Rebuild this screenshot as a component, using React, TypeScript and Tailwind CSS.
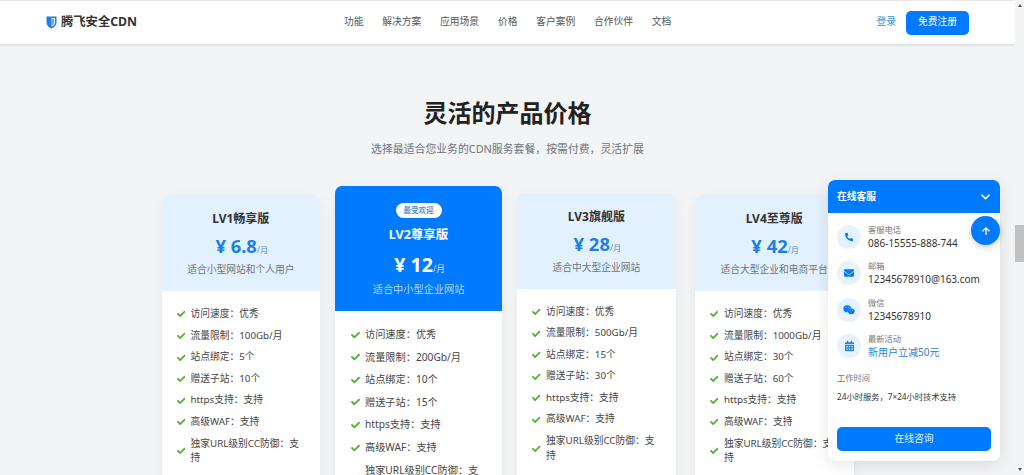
import { FaArrowUp, FaCalendarAlt, FaCheck, FaChevronDown, FaEnvelope, FaPhoneAlt, FaWeixin } from "react-icons/fa";

const navLinks = ["功能", "解决方案", "应用场景", "价格", "客户案例", "合作伙伴", "文档"];

const plans = [
  {
    name: "LV1畅享版",
    price: "6.8",
    desc: "适合小型网站和个人用户",
    features: ["访问速度：优秀", "流量限制：100Gb/月", "站点绑定：5个", "赠送子站：10个", "https支持：支持", "高级WAF：支持", "独家URL级别CC防御：支持"],
    offset: "mt-[9px]",
  },
  {
    name: "LV2尊享版",
    price: "12",
    desc: "适合中小型企业网站",
    features: ["访问速度：优秀", "流量限制：200Gb/月", "站点绑定：10个", "赠送子站：15个", "https支持：支持", "高级WAF：支持", "独家URL级别CC防御：支持"],
    featured: true,
    offset: "",
  },
  {
    name: "LV3旗舰版",
    price: "28",
    desc: "适合中大型企业网站",
    features: ["访问速度：优秀", "流量限制：500Gb/月", "站点绑定：15个", "赠送子站：30个", "https支持：支持", "高级WAF：支持", "独家URL级别CC防御：支持"],
    offset: "mt-[6.5px]",
  },
  {
    name: "LV4至尊版",
    price: "42",
    desc: "适合大型企业和电商平台",
    features: ["访问速度：优秀", "流量限制：1000Gb/月", "站点绑定：30个", "赠送子站：60个", "https支持：支持", "高级WAF：支持", "独家URL级别CC防御：支持"],
    offset: "mt-[9px]",
  },
];

const contacts = [
  { icon: FaPhoneAlt, size: "w-[8.5px]", label: "客服电话", value: "086-15555-888-744" },
  { icon: FaEnvelope, size: "w-[10px]", label: "邮箱", value: "12345678910@163.com" },
  { icon: FaWeixin, size: "w-[12px]", label: "微信", value: "12345678910" },
  { icon: FaCalendarAlt, size: "w-[9px] text-[#2a84d2]", label: "最新活动", value: "新用户立减50元", accent: true },
];

function PlanCard({ plan }: { plan: (typeof plans)[number] }) {
  if (plan.featured) {
    return (
      <div className="-mx-[4px] overflow-hidden rounded-t-[7px] bg-white shadow-[0_4px_14px_rgba(0,0,0,0.06)]">
        <div className="flex h-[125px] flex-col items-center bg-[#007bff] pt-[17px] text-white">
          <span className="flex h-[15px] items-center rounded-full bg-white px-[8px] text-[7.5px] font-medium text-[#2a80d6]">最受欢迎</span>
          <h3 className="mt-[7px] text-[12.5px] leading-[20px] font-bold">{plan.name}</h3>
          <div className="mt-[9px] flex items-baseline pl-[2px] leading-[22px]">
            <span className="text-[19.5px] font-bold">¥ {plan.price}</span>
            <span className="text-[8.7px] text-white/80">/月</span>
          </div>
          <p className="mt-[1px] text-[10.2px] leading-[16px] text-white/70">{plan.desc}</p>
        </div>
        <ul className="flex flex-col gap-[7.3px] pt-[16px] pr-[15px] pb-[60px] pl-[15.7px] text-[10.2px] leading-[15.3px] text-[#444]">
          {plan.features.map((f) => (
            <li key={f} className="flex items-center gap-[5px]">
              <FaCheck className="w-[9px] shrink-0 text-[#4fb135]" />
              <span>{f}</span>
            </li>
          ))}
        </ul>
      </div>
    );
  }
  return (
    <div className={`overflow-hidden rounded-t-[6px] bg-white shadow-[0_4px_14px_rgba(0,0,0,0.05)] ${plan.offset}`}>
      <div className="flex h-[96px] flex-col items-center bg-[#e3f1fe] pt-[14px]">
        <h3 className="text-[12px] leading-[19px] font-bold text-[#333]">{plan.name}</h3>
        <div className="mt-[6px] flex items-baseline pl-[2px] leading-[24px] text-[#1a7fe8]">
          <span className="text-[18.4px] font-bold">¥ {plan.price}</span>
          <span className="text-[8.25px] text-[#5a8fc8]">/月</span>
        </div>
        <p className="text-[9.75px] leading-[16px] whitespace-nowrap text-[#6c757d]">{plan.desc}</p>
      </div>
      <ul className="flex flex-col gap-[7px] pt-[16px] pr-[15px] pb-[60px] pl-[15px] text-[9.75px] leading-[14.6px] text-[#444]">
        {plan.features.map((f) => (
          <li key={f} className="flex items-center gap-[5.5px]">
            <FaCheck className="w-[8.5px] shrink-0 text-[#4fb135]" />
            <span>{f}</span>
          </li>
        ))}
      </ul>
    </div>
  );
}

function ChatPanel() {
  return (
    <div className="absolute top-[180px] left-[828px] w-[172px] rounded-[7px] bg-white shadow-[0_4px_16px_rgba(0,0,0,0.1)]">
      <div className="flex h-[33px] items-center justify-between rounded-t-[7px] bg-[#007bff] pr-[10px] pl-[9px] text-white">
        <span className="pt-[2px] text-[9.75px] font-bold">在线客服</span>
        <FaChevronDown className="w-[9px]" />
      </div>
      <button className="absolute top-[36px] right-0 flex h-[29px] w-[29px] items-center justify-center rounded-full bg-[#007bff] text-white shadow-[0_2px_6px_rgba(0,0,0,0.2)]">
        <FaArrowUp className="w-[8px]" />
      </button>
      <div className="flex flex-col gap-[10.3px] px-[9px] pt-[11px]">
        {contacts.map((c) => {
          const Icon = c.icon;
          return (
            <div key={c.label} className="flex items-center gap-[7px]">
              <div className="flex h-[24px] w-[24px] shrink-0 items-center justify-center rounded-full bg-[#e6f2fe] text-[#007bff]">
                <Icon className={c.size} />
              </div>
              <div>
                <div className="text-[8.25px] leading-[12px] text-[#777]">{c.label}</div>
                <div className={`text-[10px] leading-[14px] ${c.accent ? "text-[#2a84d2]" : "text-[#333]"}`}>{c.value}</div>
              </div>
            </div>
          );
        })}
      </div>
      <div className="mt-[13px] px-[9px] text-[8.25px] leading-[12px] text-[#777]">工作时间</div>
      <div className="mt-[6.5px] px-[9px] text-[8.25px] leading-[13px] text-[#333]">24小时服务，7×24小时技术支持</div>
      <div className="px-[9px] pt-[23.5px] pb-[10px]">
        <button className="flex h-[24px] w-full items-center justify-center rounded-[5px] bg-[#007bff] text-[9.75px] text-white/90">在线咨询</button>
      </div>
    </div>
  );
}

export default function App() {
  return (
    <div className="relative flex h-[475px] w-[1024px] overflow-hidden bg-[#f3f4f6] font-['Noto_Sans','Noto_Sans_CJK_SC',sans-serif]">
      <main className="w-[1015px] shrink-0">
        <header className="flex h-[44px] items-center border-t border-[#e8e8e8] bg-white px-[46px] shadow-[0_1px_3px_rgba(0,0,0,0.12)]">
          <div className="flex w-[298px] items-center gap-[4px]">
            <svg viewBox="0 0 22 26" className="h-[13px] w-[11px]">
              <path d="M1 1h20v12c0 6-5 10-10 12C6 23 1 19 1 13z" fill="#1a7fe8" />
              <path d="M11 4h7v9c0 4-3 6.500-7 8.500z" fill="#ffffff" />
              <path d="M11 6h5v7c0 3-2 4.800-5 6.300z" fill="#5aa8f0" />
            </svg>
            <span className="text-[12.3px] font-bold text-[#333]">腾飞安全CDN</span>
          </div>
          <nav className="flex gap-[18.8px] text-[9.75px] text-[#555]">
            {navLinks.map((l) => (
              <a key={l}>{l}</a>
            ))}
          </nav>
          <div className="ml-auto flex items-center gap-[10px]">
            <a className="text-[9.75px] text-[#3b8fd6]">登录</a>
            <button className="flex h-[24px] w-[63px] items-center justify-center rounded-[5px] bg-[#007bff] text-[9.75px] text-white">免费注册</button>
          </div>
        </header>

        <section className="pt-[51px] text-center">
          <h2 className="text-[24px] leading-[36px] font-bold text-[#222]">灵活的产品价格</h2>
          <p className="mt-[10px] text-[10.86px] leading-[16px] text-[#6c757d]">选择最适合您业务的CDN服务套餐，按需付费，灵活扩展</p>
        </section>

        <section className="mx-auto mt-[29px] grid w-[692px] grid-cols-4 items-start gap-[19.2px]">
          {plans.map((p) => (
            <PlanCard key={p.name} plan={p} />
          ))}
        </section>
      </main>

      <ChatPanel />

      {/* browser scrollbar */}
      <div className="relative w-[9px] bg-[#f3f4f6]">
        <div className="absolute top-[225px] h-[37px] w-full bg-[#c1c1c1]" />
        <div className="absolute top-[4px] left-[2.500px] border-x-[2.500px] border-b-[3px] border-x-transparent border-b-[#505050]" />
        <div className="absolute bottom-[4px] left-[2.500px] border-x-[2.500px] border-t-[3px] border-x-transparent border-t-[#505050]" />
      </div>
    </div>
  );
}
